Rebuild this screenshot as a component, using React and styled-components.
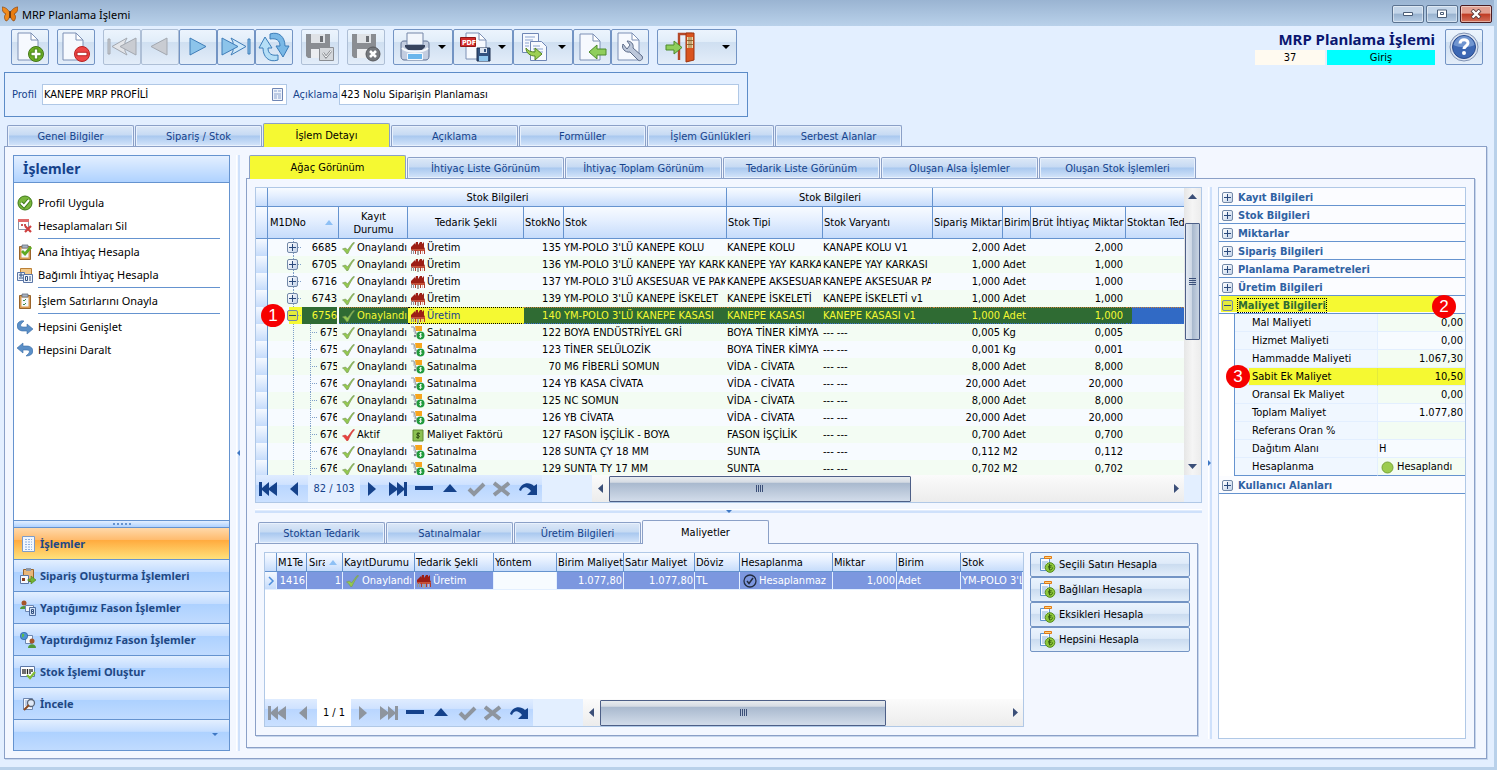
import React from 'react';
import styled, { createGlobalStyle, css } from 'styled-components';

const GlobalStyle = createGlobalStyle`
  * { box-sizing: border-box; }
  body {
    margin: 0;
    background: #b9d1ea;
    font-family: Tahoma, "DejaVu Sans Condensed", "Noto Sans", sans-serif;
    font-size: 11px;
    color: #000;
  }
  button, input { font: inherit; color: inherit; margin: 0; }
  button { padding: 0; border: 0; background: none; }
  svg { display: block; flex: none; }
`;

const uiFont = '"Noto Sans", "Open Sans", sans-serif';
const blue = '#6593cf';
const edge = '#8ba0c7';
const navy = '#15428b';
const mark = '#f5f932';

/* ---------- window ---------- */

const Window = styled.div`
  display: flex;
  flex-direction: column;
  height: 100vh;
  min-height: 700px;
  min-width: 1240px;
  border-right: 3px solid #b9d1ea;
  border-bottom: 3px solid #b9d1ea;
  background: #e3efff;
  overflow: hidden;
`;

const TitleBar = styled.header`
  display: flex;
  align-items: center;
  flex: none;
  height: 26px;
  padding: 2px 2px 0;
  gap: 4px;
  background: linear-gradient(#9ab4d2, #b9d1ea);
  font-family: ${uiFont};
  font-size: 11px;
`;

const TitleText = styled.span`
  flex: 1;
`;

const WindowButtons = styled.div`
  display: flex;
  gap: 2px;
`;

const WindowButton = styled.button`
  display: flex;
  align-items: center;
  justify-content: center;
  width: 32px;
  height: 18px;
  border: 1px solid ${p => (p.$close ? '#4a1c22' : '#5b7391')};
  border-radius: 2px;
  background: ${p =>
    p.$close
      ? 'linear-gradient(#e2a091 0 45%, #bf3a22 50%, #d2705a)'
      : 'linear-gradient(#c3d5e9 0 45%, #98b2cf 50%, #b7cee6)'};
  box-shadow: inset 0 0 0 1px rgba(255, 255, 255, 0.45);
`;

/* ---------- toolbar ---------- */

const Toolbar = styled.div`
  display: flex;
  align-items: flex-start;
  flex: none;
  gap: 8px;
  padding: 3px 11px 7px;
`;

const ToolGroup = styled.div`
  display: flex;
`;

const ToolButton = styled.button`
  display: flex;
  align-items: center;
  justify-content: center;
  gap: 4px;
  width: ${p => (p.$wide ? 80 : p.$menu ? 60 : 38)}px;
  height: 36px;
  border: 1px solid ${p => (p.disabled ? '#aebfd6' : '#7394c4')};
  border-radius: 2px;
  background: linear-gradient(#ecf4fd, #e1edf9 35%, #cfdff1 36%, #e3edf9);
  ${p =>
    (p.$menu || p.$wide) &&
    css`
      justify-content: space-between;
      padding: 0 6px;
    `}
`;

const Caret = styled.span`
  width: 0;
  height: 0;
  border: 4px solid transparent;
  border-top-color: #000;
  border-bottom: 0;
`;

const Heading = styled.div`
  display: flex;
  flex-direction: column;
  align-items: flex-end;
  margin-left: auto;
  padding-right: 2px;
`;

const HeadingTitle = styled.h1`
  margin: 0;
  font-family: ${uiFont};
  font-size: 15px;
  line-height: 21px;
  color: #0a1670;
`;

const HeadingRow = styled.div`
  display: flex;
  gap: 2px;
`;

const HeadingCell = styled.div`
  width: ${p => p.$w}px;
  height: 15px;
  line-height: 15px;
  text-align: center;
  background: ${p => p.$bg};
`;

/* ---------- filter box ---------- */

const FilterBox = styled.form`
  display: flex;
  align-items: center;
  flex: none;
  width: 744px;
  height: 45px;
  margin-left: 4px;
  padding-left: 7px;
  border: 1px solid #5b8bc7;
`;

const Label = styled.label`
  flex: none;
  width: ${p => p.$w}px;
  color: ${navy};
`;

const Field = styled.div`
  display: flex;
  align-items: center;
  flex: none;
  width: ${p => p.$w}px;
  height: 21px;
  margin-right: 6px;
  border: 1px solid #b0c8e6;
  background: #fff;
`;

const FieldInput = styled.input`
  flex: 1;
  min-width: 0;
  height: 19px;
  padding: 0 1px;
  border: 0;
  background: transparent;
  outline: 0;
`;

const FieldButton = styled.button`
  padding-right: 3px;
`;

/* ---------- tabs ---------- */

const Tabs = styled.nav`
  display: flex;
  align-items: flex-end;
  flex: none;
  height: ${p => p.$h || 23}px;
  gap: 1px;
  padding-left: ${p => p.$pad || 3}px;
`;

const Tab = styled.button`
  width: ${p => p.$w || 127}px;
  height: 21px;
  border: 1px solid ${edge};
  border-bottom: 0;
  border-radius: 2px 2px 0 0;
  color: ${navy};
  background: linear-gradient(#dde8f7, #c6daf3 45%, #a9c8ef 50%, #d5e5fa);
  box-shadow: inset 0 0 0 1px #e8f1fd;
  ${p =>
    p.$active &&
    css`
      height: 24px;
      margin-bottom: -1px;
      padding-bottom: 1px;
      color: #000;
      background: ${p.$marked ? mark : '#f3f7ff'};
      box-shadow: none;
      z-index: 1;
    `}
`;

const MainPanel = styled.main`
  display: flex;
  flex: 1;
  min-height: 0;
  margin: 0 7px 8px 4px;
  padding: 8px 11px 7px 8px;
  border: 1px solid ${edge};
  background: #f3f7ff;
  box-shadow: 1px 1px 0 #c5d5ec;
`;

/* ---------- sidebar ---------- */

const Sidebar = styled.aside`
  display: flex;
  flex-direction: column;
  flex: none;
  width: 217px;
  border: 1px solid ${blue};
  background: #fff;
  font-family: ${uiFont};
`;

const SidebarTitle = styled.h2`
  margin: 0;
  padding-left: 9px;
  height: 27px;
  line-height: 26px;
  border-bottom: 1px solid ${blue};
  background: linear-gradient(#e3efff, #afd2ff);
  font-size: 14px;
  color: ${navy};
`;

const TaskList = styled.ul`
  flex: 1;
  min-height: 0;
  margin: 0;
  padding: 8px 8px 0 3px;
  list-style: none;
  overflow: hidden;
`;

const Task = styled.li`
  padding-bottom: ${p => (p.$line ? 3 : 0)}px;
  background: ${p =>
    p.$line ? `linear-gradient(${blue}, ${blue}) 21px 24px / 182px 1px no-repeat` : 'none'};
`;

const TaskButton = styled.button`
  display: flex;
  align-items: center;
  gap: 5px;
  width: 100%;
  height: 23px;
`;

const Grip = styled.div`
  display: flex;
  align-items: center;
  justify-content: center;
  gap: 2px;
  height: 7px;
  border-top: 1px solid ${blue};
  background: linear-gradient(#e3efff, #afd2ff);
  i { width: 2px; height: 2px; background: ${blue}; }
`;

const NavButton = styled.button`
  display: flex;
  align-items: center;
  gap: 4px;
  height: 32px;
  padding-left: 6px;
  border-top: 1px solid ${blue};
  background: ${p =>
    p.$active
      ? 'linear-gradient(#ffd9aa, #ffbb6e 38%, #ffab3f 40%, #fee17b)'
      : 'linear-gradient(#e3efff, #c4ddff 38%, #add1ff 40%, #c0dbff)'};
  font-weight: bold;
  color: #1f4884;
`;

const NavMore = styled(NavButton)`
  justify-content: flex-end;
  height: 31px;
  padding-right: 11px;
`;

/* ---------- splitters ---------- */

const VSplit = styled.div`
  display: flex;
  align-items: center;
  flex: none;
  width: 16px;
  padding-left: 6px;
  background: linear-gradient(90deg, #fff 0 1px, transparent 1px 2px, #cfe1fb 2px 4px) 6px 0 / 4px 100% no-repeat;
`;

const HSplit = styled.div`
  display: flex;
  align-items: center;
  justify-content: center;
  flex: none;
  height: 17px;
  background: linear-gradient(#fff 0 1px, transparent 1px, #cfe1fb 2px 4px) 0 6px / 100% 4px no-repeat;
`;

/* ---------- content ---------- */

const Content = styled.section`
  display: flex;
  flex-direction: column;
  flex: 1;
  min-width: 0;
  padding-bottom: 3px;
`;

const Panel = styled.div`
  display: flex;
  flex: 1;
  min-height: 0;
  padding: 8px;
  border: 1px solid ${edge};
  background: #f3f7ff;
  box-shadow: 1px 1px 0 #c5d5ec;
`;

const Column = styled.div`
  display: flex;
  flex-direction: column;
  flex: 1;
  min-width: 0;
`;

const GridBox = styled.div`
  position: relative;
  display: flex;
  flex-direction: column;
  flex: 1;
  min-width: 0;
  min-height: 0;
  border: 1px solid #b0c8e6;
  background: #fff;
`;

const GridView = styled.div`
  display: flex;
  flex: 1;
  min-height: 0;
  overflow: hidden;
`;

const Table = styled.table`
  flex: 1;
  width: 100%;
  min-width: 0;
  align-self: flex-start;
  table-layout: fixed;
  border-collapse: separate;
  border-spacing: 0;
`;

const Th = styled.th`
  height: ${p => p.$h || 19}px;
  padding: 0 0 0 1px;
  border-right: 1px solid ${blue};
  border-bottom: 1px solid ${blue};
  background: linear-gradient(#f8fbff, #e6f0ff 40%, #c6dcfb);
  font-weight: normal;
  line-height: 13px;
  text-align: ${p => (p.$center ? 'center' : 'left')};
  white-space: ${p => (p.$wrap ? 'normal' : 'nowrap')};
  overflow: hidden;
  &:last-child { border-right: 0; }
`;

const SortHead = styled.span`
  display: flex;
  align-items: center;
  justify-content: space-between;
  gap: 4px;
  padding: 0 5px 0 1px;
  span { overflow: hidden; }
`;

const SortMark = styled.i`
  flex: none;
  border: 4px solid transparent;
  border-bottom: 5px solid #8ec0f5;
  border-top: 0;
`;

const Td = styled.td`
  height: 17px;
  padding: 1px 0 0;
  border-right: ${p => (p.$right ? 3 : 2)}px solid transparent;
  line-height: 16px;
  text-align: ${p => (p.$right ? 'right' : 'left')};
  white-space: nowrap;
  overflow: hidden;
`;

const StateTd = styled(Td)`
  border-right: 0;
`;

const Marker = styled.td`
  padding: 0;
  border-right: 1px solid ${blue};
  background: linear-gradient(#f5f9ff, #c6dcfb);
`;

const dots = 'repeating-linear-gradient(#7f9fc8 0 1px, transparent 1px 2px)';

const TreeTd = styled(Td)`
  padding: 0;
  background-image: ${dots}, ${p => (p.$child ? dots : 'none')};
  background-size: 1px 100%, 1px 100%;
  background-position: 25px 0, 42px 0;
  background-repeat: no-repeat;
`;

const TreeCell = styled.div`
  display: flex;
  align-items: center;
  height: 17px;
  padding-left: ${p => (p.$child ? 42 : 19)}px;
  overflow: hidden;
`;

const Dash = styled.i`
  flex: none;
  width: ${p => p.$w}px;
  height: 1px;
  background: repeating-linear-gradient(90deg, #7f9fc8 0 1px, transparent 1px 2px);
`;

const TreeNumber = styled.span`
  flex: 1;
  line-height: 16px;
  padding-top: 1px;
  padding-left: 2px;
  text-align: ${p => (p.$child ? 'left' : 'right')};
`;

const ExpandButton = styled.button`
  display: flex;
  align-items: center;
  justify-content: center;
  flex: none;
  width: 11px;
  height: 11px;
  border: 1px solid #7389a8;
  border-radius: 2px;
  background: ${p => (p.$marked ? '#e3ea3c' : 'linear-gradient(135deg, #fff, #c3d3ea)')};
`;

const Row = styled.tr`
  background: ${p => (p.$odd ? '#f3fcf3' : '#f7fbff')};
  ${p =>
    p.$selected &&
    css`
      color: ${mark};
      td:not(:first-child) {
        background: #2f6b33;
        border-top: 1px dotted #c9803a;
        border-bottom: 1px dotted #3a6fd0;
        padding: 0;
        line-height: 15px;
      }
      td:nth-child(2) { background: linear-gradient(90deg, #f7fbff 0 21px, ${mark} 21px 34px, #2f6b33 34px); border-color: transparent; }
      td:nth-child(4) { background: ${mark}; color: #15428b; border-top-color: #000; border-bottom-color: #000; }
      td:last-child { background: linear-gradient(90deg, #2f6b33 0 6px, #316ac5 6px); border-right: 0; }
      ${TreeCell} { height: 15px; }
    `}
`;

const IconText = styled.span`
  display: flex;
  align-items: center;
  gap: ${p => p.$gap || 2}px;
  padding-left: ${p => p.$pad || 3}px;
  overflow: hidden;
`;

/* ---------- scroll bars ---------- */

const VScroll = styled.div`
  display: flex;
  flex-direction: column;
  align-items: center;
  flex: none;
  width: 17px;
  background: linear-gradient(90deg, #e6e6e6, #f5f5f5 50%, #ececec);
`;

const VThumb = styled.div`
  display: flex;
  align-items: center;
  justify-content: center;
  width: 15px;
  height: 117px;
  margin-top: 17px;
  border: 1px solid #4d5f87;
  border-radius: 1px;
  background: linear-gradient(90deg, #e5ebf4, #ccd6e4 45%, #a9b9ce 50%, #c9d4e3);
`;

const HScroll = styled.div`
  display: flex;
  align-items: center;
  flex: 1;
  margin-left: ${p => p.$gap}px;
  background: linear-gradient(#fbfbfb, #ececec);
`;

const HThumb = styled.div`
  display: flex;
  align-items: center;
  justify-content: center;
  height: 26px;
  border: 1px solid #4d5f87;
  border-radius: 1px;
  background: linear-gradient(#e8ecef, #d5dbe3 22%, #a9b9ce 26%, #d2dcea);
`;

const ScrollButton = styled.button`
  display: flex;
  align-items: center;
  justify-content: center;
  flex: none;
  width: 17px;
  height: 18px;
`;

const Spacer = styled.span`
  flex: 1;
`;

const GridFooter = styled.div`
  display: flex;
  flex: none;
  height: 27px;
  background: #e3efff;
`;

const PagerButton = styled.button`
  display: flex;
  align-items: center;
  justify-content: center;
  width: 26px;
  color: ${navy};
  background: linear-gradient(#dfecff, #cfe2ff 35%, #b9d6ff 38%, #cae0ff);
  &:disabled { color: #8e959e; }
`;

const PagerLabel = styled.span`
  width: ${p => p.$w}px;
  line-height: 28px;
  text-align: center;
  color: ${p => (p.$plain ? '#000' : navy)};
  background: ${p => (p.$plain ? '#fff' : '#e3efff')};
`;

const Corner = styled.span`
  width: 17px;
`;

/* ---------- costs ---------- */

const Costs = styled.div`
  display: flex;
  flex-direction: column;
  flex: 0 0 219px;
  padding-bottom: 3px;
  padding-right: 4px;
`;

const CostPanel = styled(Panel)`
  padding-right: 7px;
  gap: 6px;
`;

const CostRow = styled.tr`
  color: #fff;
  background: #7c97df;
  td {
    height: 18px;
    padding: 0 1px;
    border-right: 1px solid #e3efff;
    border-bottom: 1px solid #e3efff;
  }
`;

const EmptyTd = styled(Td)`
  background: #f7fbff;
`;

const ActionList = styled.div`
  display: flex;
  flex-direction: column;
  flex: none;
  width: 160px;
`;

const ActionButton = styled.button`
  display: flex;
  align-items: center;
  gap: 3px;
  height: 25px;
  padding-left: 8px;
  border: 1px solid #7394c4;
  border-radius: 2px;
  background: linear-gradient(#eaf3fd, #dfebf9 45%, #cbdcf0 50%, #e3eefa);
`;

/* ---------- properties ---------- */

const Properties = styled.aside`
  flex: none;
  width: 248px;
  border: 1px solid #b0c8e6;
  background: #fff;
`;

const Group = styled.div`
  position: relative;
  display: flex;
  align-items: center;
  gap: 5px;
  height: 18px;
  padding: 1px 0 0 3px;
  border-bottom: 1px solid ${blue};
  background: ${p =>
    p.$open ? `linear-gradient(${mark}, ${mark}) 2px 0 / 226px 16px no-repeat, #fbfcff` : '#fbfcff'};
  font-weight: bold;
  color: ${p => (p.$open ? '#2f6b33' : '#2f62a3')};
`;

const GroupName = styled.span`
  line-height: 13px;
  outline: ${p => (p.$open ? '1px dotted #000' : '0')};
`;

const PropTable = styled.table`
  width: calc(100% - 15px);
  margin-left: 15px;
  table-layout: fixed;
  border-collapse: separate;
  border-spacing: 0;
  border-left: 1px solid ${blue};
  tr:last-child > * { border-bottom-color: ${blue}; }
`;

const PropName = styled.th`
  position: relative;
  width: 143px;
  height: 18px;
  padding: 1px 0 0 17px;
  font-weight: normal;
  line-height: 16px;
  text-align: left;
  background: ${p => (p.$marked ? `linear-gradient(${mark}, ${mark}) 14px 0 no-repeat, #f0f7ff` : '#f0f7ff')};
  border-right: 1px solid ${p => (p.$marked ? '#e3ea3c' : '#e3efff')};
  border-bottom: 1px solid #e3efff;
`;

const PropValue = styled.td`
  height: 18px;
  padding: 1px 2px 0 1px;
  line-height: 16px;
  text-align: ${p => (p.$left ? 'left' : 'right')};
  background: ${p => (p.$marked ? mark : p.$odd ? '#f7fbff' : '#f3fcf3')};
  border-bottom: 1px solid #e3efff;
`;

const Badge = styled.span`
  position: absolute;
  left: ${p => p.$x}px;
  top: ${p => p.$y}px;
  width: 24px;
  height: 23px;
  border-radius: 50%;
  background: #f60000;
  color: #fff;
  font-family: "Liberation Sans", Arial, sans-serif;
  font-size: 17px;
  font-weight: normal;
  line-height: 23px;
  text-align: center;
  z-index: 2;
`;

/* ---------- icons ---------- */

const Svg = ({ s = 16, w, h, children }) => (
  <svg width={w || s} height={h || s} viewBox={`0 0 ${w || s} ${h || s}`} fill="none" aria-hidden="true">
    {children}
  </svg>
);

const Sheet = ({ x = 4, y = 1, w = 20, h = 27 }) => (
  <>
    <path d={`M${x} ${y}h${w - 7}l7 7v${h - 7}h-${w}z`} fill="#f6f9fe" stroke="#7d90b5" />
    <path d={`M${x + w - 7} ${y}v7h7z`} fill="#fff" stroke="#7d90b5" />
  </>
);

const Butterfly = () => (
  <Svg s={16}>
    <path d="M8 7C6 3 3 1 0 1c0 3 1 6 4 7-2 1-2 5 0 7 2 0 3-3 4-5z" fill="#f08a1c" stroke="#8a4510" strokeWidth=".7" />
    <path d="M8 7c2-4 5-6 8-6 0 3-1 6-4 7 2 1 2 5 0 7-2 0-3-3-4-5z" fill="#e87d12" stroke="#8a4510" strokeWidth=".7" />
    <path d="M8 5v7" stroke="#50280c" strokeWidth="1.4" />
  </Svg>
);

const DocAdd = () => (
  <Svg s={30}>
    <Sheet x={3} />
    <circle cx="21" cy="22" r="7.5" fill="#6cae24" stroke="#43761a" />
    <path d="M21 16.5v11M15.5 22h11" stroke="#4b861b" strokeWidth="4.4" />
    <path d="M21 17.5v9M16.5 22h9" stroke="#fff" strokeWidth="2.4" />
  </Svg>
);

const DocRemove = () => (
  <Svg s={30}>
    <Sheet x={2} />
    <circle cx="21" cy="22" r="7.5" fill="#ee4545" stroke="#b82222" />
    <path d="M15.5 22h11" stroke="#b82222" strokeWidth="4.4" />
    <path d="M16.5 22h9" stroke="#fff" strokeWidth="2.4" />
  </Svg>
);

const Media = ({ kind, off }) => {
  const fill = off ? '#c9ccd2' : '#8cc4ea';
  const light = off ? '#e3e5e9' : '#cfe9fa';
  const stroke = off ? '#a3a8b0' : '#3f7db8';
  const shapes = {
    first: ['M1 7h2v15H1z', 'M20 6L5 14.5 20 23l-2-4v-9z', 'M29 6L13 14.5 29 23z'],
    prev: ['M22 6L6 14.5 22 23z'],
    next: ['M7 6l16 8.5L7 23z'],
    last: ['M27 7h2v15h-2z', 'M10 6l15 8.5L10 23l2-4v-9z', 'M1 6l16 8.5L1 23z'],
  };
  return (
    <Svg s={30}>
      {shapes[kind].map((d, i) => (
        <path key={d} d={d} fill={i === 1 ? light : fill} stroke={stroke} strokeLinejoin="round" />
      ))}
    </Svg>
  );
};

const Sync = () => (
  <Svg s={32}>
    <path d="M12 3c9-3 15 3 15 12h4l-6 11-7-11h4c0-6-4-8-10-7z" fill="#79b8e6" stroke="#3c7db8" />
    <path d="M20 29C11 32 5 26 5 17H1L7 6l7 11h-4c0 6 4 8 10 7z" fill="#b5def6" stroke="#3c7db8" />
  </Svg>
);

const Disk = ({ kind }) => (
  <Svg s={30}>
    <path d="M1 2h24v24H3l-2-2z" fill="#8a8d92" />
    <path d="M6 2h14v9H6z" fill="#dfe2e6" />
    <path d="M15 4h3v6h-3z" fill="#6b6e73" />
    <path d="M6 17h14v9H6z" fill="#eceef1" />
    {kind === 'ok' ? (
      <>
        <path d="M14.5 15.5h14v13h-14z" fill="#d5d8dc" stroke="#8a8d92" />
        <path d="M18 21l3 4 5-6" stroke="#8a8d92" strokeWidth="2.5" />
        <path d="M18 21l3 4 5-6" stroke="#fff" />
      </>
    ) : (
      <>
        <circle cx="22" cy="22" r="7" fill="#75787d" stroke="#57595d" />
        <path d="M19 19l6 6M25 19l-6 6" stroke="#fff" strokeWidth="2.6" />
      </>
    )}
  </Svg>
);

const Printer = () => (
  <Svg s={30}>
    <path d="M1 12c0-2 1-3 3-3h22c2 0 3 1 3 3v12c0 2-1 4-3 4H4c-2 0-3-2-3-4z" fill="#c3cde0" stroke="#5f7092" />
    <path d="M7 1h16v12H7z" fill="#f2f6fc" stroke="#7486a8" />
    <path d="M5 13h20v2l-3 3H8l-3-3z" fill="#38445e" />
    <path d="M2 16c5 5 21 5 26 0" stroke="#f4f7fb" strokeWidth="2" />
    <path d="M7.5 21.5h15v6h-15z" fill="#6bb6ec" stroke="#f4f8fd" />
  </Svg>
);

const Pdf = () => (
  <Svg s={32}>
    <Sheet x={6} y={2} w={20} h={26} />
    <path d="M.5 6.5h15v9H.5z" fill="#d02b2b" stroke="#8e1717" />
    <text x="2" y="13.5" fontSize="7" fontWeight="bold" fill="#fff" fontFamily="DejaVu Sans Condensed">PDF</text>
    <path d="M17 17h13v13H17z" fill="#33527f" stroke="#1d2e4e" />
    <path d="M20 17h7v5h-7z" fill="#dbe3ef" />
    <path d="M24 18h2v3h-2z" fill="#33527f" />
    <path d="M19 25h9v5h-9z" fill="#8fc6ee" />
  </Svg>
);

const CopyDocs = () => (
  <Svg s={30}>
    <path d="M2.5 1.5h16v19h-16z" fill="#f6f9fe" stroke="#6f86b5" />
    <path d="M5 5h10M5 8h8M5 11h4M5 14h4" stroke="#8ba3cf" />
    <path d="M10.5 9.5h11l5 5v14h-16z" fill="#f6f9fe" stroke="#6f86b5" />
    <path d="M13 14h7M13 17h10M13 20h10" stroke="#8ba3cf" />
    <path d="M6 16c2 3 5 4 9 4v-4l7 6-7 6v-4c-5 0-9-3-9-8z" fill="#9dd052" stroke="#568622" />
  </Svg>
);

const DocBack = () => (
  <Svg s={30}>
    <Sheet x={3} y={2} w={20} h={26} />
    <path d="M12 20l8-7v4h9v6h-9v4z" fill="#8fce5c" stroke="#4d8a2c" />
  </Svg>
);

const DocTool = () => (
  <Svg s={30}>
    <Sheet x={3} y={1} w={21} h={27} />
    <path d="M8 12c-2 4 2 9 7 8l8 8c2 2 6-1 4-4l-9-8c1-4-2-7-6-7l3 4-3 4z" fill="#bcc7da" stroke="#5c6b88" />
  </Svg>
);

const Door = () => (
  <Svg s={32}>
    <path d="M15 29V3h13" stroke="#b5492a" strokeWidth="2.4" />
    <path d="M22 2h8v27l-8 2z" fill="#d9531e" stroke="#9c3410" />
    <path d="M23 6h6v11h-6z" fill="#f1d9a8" />
    <path d="M25 6v11M27 6v11M23 9.5h6M23 13.5h6" stroke="#7f5420" strokeWidth=".8" />
    <path d="M2 14h8v-4l8 6.5-8 6.5v-4H2z" fill="#8fce5c" stroke="#4d8a2c" />
  </Svg>
);

const Help = () => (
  <Svg s={30}>
    <circle cx="15" cy="15" r="14" fill="#dbe3f0" stroke="#7f92b4" />
    <circle cx="15" cy="15" r="11.5" fill="#3d68b4" stroke="#2a4b8c" />
    <path d="M4.5 13c1-5 5-9 10.5-9s9.5 4 10.5 9c-6 3-15 3-21 0z" fill="#86a8dc" opacity=".7" />
    <path d="M11 11.5c0-5 8-5 8-.5 0 3-4 3-4 6" stroke="#fff" strokeWidth="3" />
    <circle cx="15" cy="21" r="2" fill="#fff" />
  </Svg>
);

const FormIcon = () => (
  <Svg w={11} h={13}>
    <path d="M.5.5h10v12H.5z" fill="#eef3fb" stroke="#6f86b5" />
    <path d="M2 3h3M6 3h3M2 6h7M2 8h3M6 8h3M2 10h3M6 10h3" stroke="#8ba3cf" />
  </Svg>
);

const OkRound = () => (
  <Svg s={16}>
    <circle cx="8" cy="8" r="7" fill="#79b63c" stroke="#3d7a17" />
    <path d="M4 8l3 3 5-6" stroke="#3d7a17" strokeWidth="4" />
    <path d="M4 8l3 3 5-6" stroke="#fff" strokeWidth="2" />
  </Svg>
);

const FormDelete = () => (
  <Svg s={16}>
    <path d="M1.5 1.5h10v10h-10z" fill="#fff" stroke="#8994a8" />
    <path d="M1 1h11v3H1z" fill="#e06a6a" />
    <path d="M4 6h2v2H4zM7 6h2v2H7z" fill="#c95656" />
    <path d="M8 8l6 6M14 8l-6 6" stroke="#cf3f3f" strokeWidth="2.2" />
  </Svg>
);

const Clipboard = ({ big }) => (
  <Svg s={16}>
    <path d="M2.5 2.5h11v13h-11z" fill="#d99b52" stroke="#9a642a" />
    <path d="M4.5 4.5h7v9h-7z" fill="#f4f8fd" />
    <path d="M5 1h6v3H5z" fill="#a9b3c1" stroke="#66707f" strokeWidth=".8" />
    {big ? (
      <path d="M5 7l3 3 6-7" stroke="#5faa22" strokeWidth="2.8" />
    ) : (
      <path d="M6 7l1 1 2-2M6 11l1 1 2-2" stroke="#3f8a4a" />
    )}
  </Svg>
);

const Numbers = () => (
  <Svg s={16}>
    <path d="M3.5 1.5h11v10h-11z" fill="#f2c98a" stroke="#bb8037" />
    <path d="M.5 5.5h7v8h-7z" fill="#e6eefb" stroke="#5b76a6" />
    <path d="M2 8h4M4 6v4M2 11h4" stroke="#33507f" />
    <path d="M6.5 7.5h9v8h-9z" fill="#eef4fc" stroke="#5b76a6" />
    <path d="M8.5 9.5h2v4h-2zM13 9v5" stroke="#33507f" />
  </Svg>
);

const Curl = ({ back }) => (
  <Svg s={16}>
    {back ? (
      <path d="M6 1L0 6l6 5V8h4c2 0 3 1 2 3l-3 3c4 0 7-2 7-5 0-3-3-5-6-5H6z" fill="#5b8fc7" stroke="#3d6fa8" strokeWidth=".6" />
    ) : (
      <path d="M10 15l6-5-6-5v3H6C4 8 3 7 4 5l3-3C3 1 0 4 0 7c0 3 3 5 6 5h4z" fill="#5b8fc7" stroke="#3d6fa8" strokeWidth=".6" />
    )}
  </Svg>
);

const ListIcon = () => (
  <Svg s={16}>
    <path d="M2.5.5h12v15h-12z" fill="#f2f7fe" stroke="#7d9cc9" />
    <path d="M5 3.5h7M5 6h7M5 8.5h7M5 11h7M5 13.5h7" stroke="#8fb0de" strokeDasharray="2 1" />
  </Svg>
);

const OrderIcon = () => (
  <Svg s={16}>
    <path d="M3.5 1.5h10v12h-10z" fill="#e8b67a" stroke="#9a642a" />
    <path d="M6 0h5v3H6z" fill="#8e98a8" />
    <path d="M.5 7.5h8v8h-8z" fill="#f4f8fd" stroke="#5b76a6" />
    <path d="M2 10h3v3H2z" fill="#8a3d1c" />
    <path d="M8 11h3V8l5 4-5 4v-3H8z" fill="#72b534" stroke="#4a7f1f" strokeWidth=".6" />
  </Svg>
);

const PersonDoc = () => (
  <Svg s={16}>
    <circle cx="4" cy="3" r="2.5" fill="#a5552a" />
    <path d="M0 9c0-4 8-4 8 0z" fill="#4f9a3c" />
    <path d="M5.5 5.5h8v6h-8z" fill="#f4f8fd" stroke="#6d86b0" />
    <path d="M9.5 7.5h6v8h-6z" fill="#cfe0f6" stroke="#4d6c9f" />
    <path d="M11.5 9.5h2v2h-2zM11.5 11.5h2v2h-2z" stroke="#33507f" />
  </Svg>
);

const GlobePerson = () => (
  <Svg s={16}>
    <path d="M5.5 3.5h7v8h-7z" fill="#f4f8fd" stroke="#6d86b0" />
    <circle cx="4" cy="4" r="3.7" fill="#4b93d6" stroke="#2b5f9d" strokeWidth=".7" />
    <path d="M2 2c2-1 3 1 2 2S3 6 2 5z" fill="#5dbb4a" />
    <circle cx="12" cy="9" r="2.5" fill="#a5552a" />
    <path d="M8 16c0-5 8-5 8 0z" fill="#4f9a3c" />
  </Svg>
);

const Barcode = () => (
  <Svg s={16}>
    <path d="M.5 2.5h14v10H.5z" fill="#fff" stroke="#5b76a6" />
    <path d="M3 5v5M5 5v5M7.500 5v5M10 5v5M12 5v3" stroke="#222" strokeWidth="1.3" />
    <path d="M7 11l3 3 5-6" stroke="#82bd35" strokeWidth="2.2" />
  </Svg>
);

const Inspect = () => (
  <Svg s={16}>
    <path d="M3.5 2.5h9v11h-9z" fill="#f4f8fd" stroke="#6d86b0" />
    <path d="M5 5h5M5 7h3M5 9h3" stroke="#8ba3cf" />
    <circle cx="11" cy="7" r="3.5" fill="#dfe9f7" stroke="#5a6678" strokeWidth="1.3" />
    <path d="M9 9l-5 5" stroke="#8a4a20" strokeWidth="2" />
  </Svg>
);

const Check = ({ red }) => (
  <Svg w={13} h={12}>
    <path d="M.5 7l3-1 2 2L11 .7h1.5C9.5 4 7.5 8 6 11.5H4.5C3.5 9.5 2 8 .5 7z" fill={red ? '#e8413c' : '#93c94f'} stroke={red ? '#cf3a36' : '#7a9a58'} strokeWidth=".7" />
  </Svg>
);

const Factory = () => (
  <Svg w={14} h={14}>
    <path d="M0 8V6l4-4v2l1-3h2v3l2-3h2v2l2-2v5l1 2z" fill="#9c1f16" />
    <path d="M0 8h14v2H0z" fill="#c4523c" />
    <path d="M0 9h1v4H0zM2 9h1v4H2z" fill="#8f949b" />
    <path d="M4 9h1v4H4zM9 9h1v4H9zM13 9h1v4h-1z" fill="#b23a2b" />
    <path d="M6 10h2v4H6z" fill="#a9a39e" />
    <path d="M11 10h1v3h-1z" fill="#e2b4ac" />
  </Svg>
);

const Cart = () => (
  <Svg w={14} h={14}>
    <path d="M0 1h3l2 7h3" stroke="#8f979f" />
    <path d="M2 3h3M2 5h3M3 7h3" stroke="#a9b0b8" />
    <path d="M4 0h7v5H5z" fill="#f7a51e" />
    <circle cx="4" cy="10" r="1.2" fill="#7a828b" />
    <circle cx="9.5" cy="9.5" r="4" fill="#1f9a3c" />
    <path d="M11 8c-2-1-3 0-2 1l1.5.8c.8 1-1 1.500-2.500.7M9.500 7v5" stroke="#fff" strokeWidth=".8" />
  </Svg>
);

const Money = () => (
  <Svg w={14} h={14}>
    <path d="M2 2h10v11H2z" fill="#8cc152" stroke="#5f8a30" />
    <path d="M9 5.500c-2-1-4 0-3 1.500l2 .8c1.500 1-1 2.500-3 1.200M7 4.500v6.500" stroke="#2c4a12" />
  </Svg>
);

const OkDark = () => (
  <Svg s={14}>
    <circle cx="7" cy="7" r="6" stroke="#222c40" strokeWidth="1.3" />
    <path d="M4 7l2 2.5L10 4" stroke="#222c40" strokeWidth="1.5" />
  </Svg>
);

const CalcIcon = () => (
  <Svg s={17}>
    <path d="M1.5 2.5h9v12h-9z" fill="#f7fafe" stroke="#5f93cc" />
    <path d="M3 6h6M3 8h4M3 10h3M3 12h3" stroke="#8ab0dc" />
    <path d="M5.5.5h7v2h-7z" fill="#ffd27a" stroke="#e07a14" />
    <circle cx="11" cy="11.5" r="4.8" fill="#8cc63a" stroke="#558c1c" />
    <path d="M10.5 8v6c2 0 3-1 3-2.5M9 10.5l3.5-1M9 12l3.5-1" stroke="#31570f" strokeWidth=".9" />
  </Svg>
);

const Plus = ({ open }) => (
  <Svg s={7}>
    <path d={open ? 'M0 3.5h7' : 'M0 3.5h7M3.5 0v7'} stroke="#2b4a7c" />
  </Svg>
);

const pagerPaths = {
  first: <path d="M0 1v14h3V9l7 6V9l8 6V1l-8 6V1L3 7V1z" fill="currentColor" />,
  prev: <path d="M13 1v14L5 8z" fill="currentColor" />,
  next: <path d="M5 1v14l8-7z" fill="currentColor" />,
  last: <path d="M0 1v14l8-6v6l7-6v6h3V1h-3v6L8 1v6z" fill="currentColor" />,
  minus: <path d="M0 5h18v4H0z" fill="currentColor" />,
  up: <path d="M2 11l7-8 7 8z" fill="currentColor" />,
  check: <path d="M2 8l5 5L17 3" stroke="currentColor" strokeWidth="4" />,
  cancel: <path d="M1 2l15 12M16 2L1 14" stroke="currentColor" strokeWidth="4" />,
  redo: <path d="M0 9C2 2 10 0 15 5l3-2v11H8l4-4C8 5 4 5 2 10z" fill="currentColor" />,
};

const Arrow = ({ dir }) => {
  const d = { up: 'M0 6l4.5-5L9 6z', down: 'M0 2l4.5 5L9 2z', left: 'M7 0v9L2 4.5z', right: 'M3 0v9l5-4.5z' };
  return (
    <Svg s={9}>
      <path d={d[dir]} fill="#3b4f78" />
    </Svg>
  );
};

const SplitArrow = ({ dir }) => {
  const d = { left: 'M4 0v6L1 3z', right: 'M0 0v6l3-3z', down: 'M0 1h6L3 4z' };
  return (
    <Svg s={6}>
      <path d={d[dir]} fill="#3f78c4" />
    </Svg>
  );
};

/* ---------- data ---------- */

const mainTabs = ['Genel Bilgiler', 'Sipariş / Stok', 'İşlem Detayı', 'Açıklama', 'Formüller', 'İşlem Günlükleri', 'Serbest Alanlar'];
const viewTabs = ['Ağaç Görünüm', 'İhtiyaç Liste Görünüm', 'İhtiyaç Toplam Görünüm', 'Tedarik Liste Görünüm', 'Oluşan Alsa İşlemler', 'Oluşan Stok İşlemleri'];
const costTabs = ['Stoktan Tedarik', 'Satınalmalar', 'Üretim Bilgileri', 'Maliyetler'];

const tasks = [
  { text: 'Profil Uygula', icon: <OkRound /> },
  { text: 'Hesaplamaları Sil', icon: <FormDelete />, line: true },
  { text: 'Ana İhtiyaç Hesapla', icon: <Clipboard big /> },
  { text: 'Bağımlı İhtiyaç Hesapla', icon: <Numbers />, line: true },
  { text: 'İşlem Satırlarını Onayla', icon: <Clipboard />, line: true },
  { text: 'Hepsini Genişlet', icon: <Curl /> },
  { text: 'Hepsini Daralt', icon: <Curl back /> },
];

const navItems = [
  ['İşlemler', <ListIcon />],
  ['Sipariş Oluşturma İşlemleri', <OrderIcon />],
  ['Yaptığımız Fason İşlemler', <PersonDoc />],
  ['Yaptırdığımız Fason İşlemler', <GlobePerson />],
  ['Stok İşlemi Oluştur', <Barcode />],
  ['İncele', <Inspect />],
];

// no, state, supply, stock no, stock, type, variant, amount, unit
const rows = [
  ['6685', 'Onaylandı', 'Üretim', '135', "YM-POLO 3'LÜ KANEPE KOLU", 'KANEPE KOLU', 'KANAPE KOLU V1', '2,000', 'Adet'],
  ['6705', 'Onaylandı', 'Üretim', '136', "YM-POLO 3'LÜ KANEPE YAY KARK", 'KANEPE YAY KARKA', 'KANEPE YAY KARKASI', '1,000', 'Adet'],
  ['6716', 'Onaylandı', 'Üretim', '137', "YM-POLO 3'LÜ AKSESUAR VE PAK", 'KANEPE AKSESUAR', 'KANEPE AKSESUAR PA', '1,000', 'Adet'],
  ['6743', 'Onaylandı', 'Üretim', '139', "YM-POLO 3'LÜ KANEPE İSKELET", 'KANEPE İSKELETİ', 'KANEPE İSKELETİ v1', '1,000', 'Adet'],
  ['6756', 'Onaylandı', 'Üretim', '140', "YM-POLO 3'LÜ KANEPE KASASI", 'KANEPE KASASI', 'KANEPE KASASI v1', '1,000', 'Adet'],
  ['6757', 'Onaylandı', 'Satınalma', '122', 'BOYA ENDÜSTRİYEL GRİ', 'BOYA TİNER KİMYA', '--- ---', '0,005', 'Kg'],
  ['6758', 'Onaylandı', 'Satınalma', '123', 'TİNER SELÜLOZİK', 'BOYA TİNER KİMYA', '--- ---', '0,001', 'Kg'],
  ['6759', 'Onaylandı', 'Satınalma', '70', 'M6 FİBERLİ SOMUN', 'VİDA - CİVATA', '--- ---', '8,000', 'Adet'],
  ['6760', 'Onaylandı', 'Satınalma', '124', 'YB KASA CİVATA', 'VİDA - CİVATA', '--- ---', '20,000', 'Adet'],
  ['6761', 'Onaylandı', 'Satınalma', '125', 'NC SOMUN', 'VİDA - CİVATA', '--- ---', '8,000', 'Adet'],
  ['6762', 'Onaylandı', 'Satınalma', '126', 'YB CİVATA', 'VİDA - CİVATA', '--- ---', '20,000', 'Adet'],
  ['6763', 'Aktif', 'Maliyet Faktörü', '127', 'FASON İŞÇİLİK - BOYA', 'FASON İŞÇİLİK', '--- ---', '0,700', 'Adet'],
  ['6764', 'Onaylandı', 'Satınalma', '128', 'SUNTA ÇY 18 MM', 'SUNTA', '--- ---', '0,112', 'M2'],
  ['6765', 'Onaylandı', 'Satınalma', '129', 'SUNTA TY 17 MM', 'SUNTA', '--- ---', '0,702', 'M2'],
];

const supplyIcons = { 'Üretim': <Factory />, 'Satınalma': <Cart />, 'Maliyet Faktörü': <Money /> };

const treeCols = [12, 71, 69, 116, 40, 163, 96, 110, 70, 28, 95, null];
const costCols = [12, 30, 36, 72, 79, 63, 67, 71, 45, 93, 64, 64, null];

const groups = ['Kayıt Bilgileri', 'Stok Bilgileri', 'Miktarlar', 'Sipariş Bilgileri', 'Planlama Parametreleri', 'Üretim Bilgileri'];

const costProps = [
  ['Mal Maliyeti', '0,00'],
  ['Hizmet Maliyeti', '0,00'],
  ['Hammadde Maliyeti', '1.067,30'],
  ['Sabit Ek Maliyet', '10,50'],
  ['Oransal Ek Maliyet', '0,00'],
  ['Toplam Maliyet', '1.077,80'],
  ['Referans Oran %', ''],
  ['Dağıtım Alanı', 'H'],
  ['Hesaplanma', 'Hesaplandı'],
];

const actions = ['Seçili Satırı Hesapla', 'Bağlıları Hesapla', 'Eksikleri Hesapla', 'Hepsini Hesapla'];

/* ---------- parts ---------- */

const TabBar = ({ items, active, width, marked, height, pad }) => (
  <Tabs $h={height} $pad={pad}>
    {items.map(item => (
      <Tab key={item} type="button" $w={width} $active={item === active} $marked={marked}>
        {item}
      </Tab>
    ))}
  </Tabs>
);

const Cols = ({ widths }) => (
  <colgroup>
    {widths.map((w, i) => (
      <col key={i} width={w || undefined} />
    ))}
  </colgroup>
);

const Pager = ({ label, width, plain, stops }) => {
  const button = (kind, off) => (
    <PagerButton key={kind} type="button" aria-label={kind} disabled={off}>
      <Svg w={20} h={16}>{pagerPaths[kind]}</Svg>
    </PagerButton>
  );
  return (
    <>
      {['first', 'prev'].map(k => button(k, stops))}
      <PagerLabel $w={width} $plain={plain}>{label}</PagerLabel>
      {['next', 'last'].map(k => button(k, stops))}
      {['minus', 'up'].map(k => button(k))}
      {['check', 'cancel'].map(k => button(k, true))}
      {button('redo')}
    </>
  );
};

const HorizontalBar = ({ gap, size }) => (
  <HScroll $gap={gap}>
    <ScrollButton type="button" aria-label="left"><Arrow dir="left" /></ScrollButton>
    <HThumb style={{ width: `${size}%` }}>
      <Svg s={9}><path d="M1.5 1v7M3.5 1v7M5.5 1v7M7.5 1v7" stroke="#3b4f78" /></Svg>
    </HThumb>
    <Spacer />
    <ScrollButton type="button" aria-label="right"><Arrow dir="right" /></ScrollButton>
  </HScroll>
);

const TreeRow = ({ row, index }) => {
  const [no, state, supply, stockNo, stock, type, variant, amount, unit] = row;
  const child = index > 4;
  const selected = index === 4;
  return (
    <Row $odd={index % 2 === 1} $selected={selected}>
      <Marker />
      <TreeTd $child={child}>
        <TreeCell $child={child}>
          {!child && (
            <ExpandButton type="button" aria-label={no} $marked={selected}>
              <Plus open={selected} />
            </ExpandButton>
          )}
          <Dash $w={child ? 8 : 4} />
          <TreeNumber $child={child}>{no}</TreeNumber>
        </TreeCell>
      </TreeTd>
      <StateTd><IconText><Check red={state === 'Aktif'} />{state}</IconText></StateTd>
      <Td><IconText>{supplyIcons[supply]}{supply}</IconText></Td>
      <Td $right>{stockNo}</Td>
      <Td>{stock}</Td>
      <Td>{type}</Td>
      <Td>{variant}</Td>
      <Td $right>{amount}</Td>
      <Td>{unit}</Td>
      <Td $right>{amount}</Td>
      <Td />
    </Row>
  );
};

const TreeGrid = () => (
  <GridBox>
    <Badge $x={5} $y={116}>1</Badge>
    <GridView>
      <Table>
        <Cols widths={treeCols} />
        <thead>
          <tr>
            <Th />
            <Th colSpan={5} $center>Stok Bilgileri</Th>
            <Th colSpan={2} $center>Stok Bilgileri</Th>
            <Th colSpan={4} />
          </tr>
          <tr>
            <Th $h={32} />
            <Th><SortHead><span>M1DNo</span><SortMark /></SortHead></Th>
            <Th $center $wrap>Kayıt Durumu</Th>
            <Th $center>Tedarik Şekli</Th>
            <Th>StokNo</Th>
            <Th>Stok</Th>
            <Th>Stok Tipi</Th>
            <Th>Stok Varyantı</Th>
            <Th>Sipariş Miktar</Th>
            <Th>Birim</Th>
            <Th>Brüt İhtiyaç Miktar</Th>
            <Th>Stoktan Ted</Th>
          </tr>
        </thead>
        <tbody>
          {rows.map((row, i) => (
            <TreeRow key={row[0]} row={row} index={i} />
          ))}
        </tbody>
      </Table>
      <VScroll>
        <ScrollButton type="button" aria-label="up"><Arrow dir="up" /></ScrollButton>
        <VThumb>
          <Svg s={9}><path d="M1 1.5h7M1 3.5h7M1 5.5h7M1 7.5h7" stroke="#3b4f78" /></Svg>
        </VThumb>
        <Spacer />
        <ScrollButton type="button" aria-label="down"><Arrow dir="down" /></ScrollButton>
      </VScroll>
    </GridView>
    <GridFooter>
      <Pager label="82 / 103" width={52} />
      <HorizontalBar gap={50} size={51} />
      <Corner />
    </GridFooter>
  </GridBox>
);

const CostGrid = () => (
  <GridBox>
    <GridView>
      <Table>
        <Cols widths={costCols} />
        <thead>
          <tr>
            <Th />
            <Th>M1Te</Th>
            <Th><SortHead><span>Sıra</span><SortMark /></SortHead></Th>
            <Th>KayıtDurumu</Th>
            <Th>Tedarik Şekli</Th>
            <Th>Yöntem</Th>
            <Th>Birim Maliyet</Th>
            <Th>Satır Maliyet</Th>
            <Th>Döviz</Th>
            <Th>Hesaplanma</Th>
            <Th>Miktar</Th>
            <Th>Birim</Th>
            <Th>Stok</Th>
          </tr>
        </thead>
        <tbody>
          <CostRow>
            <Marker><Svg w={10} h={12}><path d="M3 2l4 4-4 4" stroke="#4f8fdc" strokeWidth="1.5" /></Svg></Marker>
            <Td $right>1416</Td>
            <Td $right>1</Td>
            <Td><IconText $gap={3} $pad={2}><Check />Onaylandı</IconText></Td>
            <Td><IconText $pad={1}><Factory />Üretim</IconText></Td>
            <EmptyTd />
            <Td $right>1.077,80</Td>
            <Td $right>1.077,80</Td>
            <Td>TL</Td>
            <Td><IconText $pad={2}><OkDark />Hesaplanmaz</IconText></Td>
            <Td $right>1,000</Td>
            <Td>Adet</Td>
            <Td>YM-POLO 3'LÜ</Td>
          </CostRow>
        </tbody>
      </Table>
    </GridView>
    <GridFooter>
      <Pager label="1 / 1" width={34} plain stops />
      <HorizontalBar gap={50} size={65} />
    </GridFooter>
  </GridBox>
);

const PropertyGroup = ({ name, open, children }) => (
  <Group $open={open}>
    <ExpandButton type="button" aria-label={name} $marked={open}><Plus open={open} /></ExpandButton>
    <GroupName $open={open}>{name}</GroupName>
    {children}
  </Group>
);

const PropertyGrid = () => (
  <Properties>
    {groups.map(name => (
      <PropertyGroup key={name} name={name} />
    ))}
    <PropertyGroup name="Maliyet Bilgileri" open>
      <Badge $x={213} $y={-1}>2</Badge>
    </PropertyGroup>
    <PropTable>
      <tbody>
        {costProps.map(([name, value], i) => {
          const marked = i === 3;
          return (
            <tr key={name}>
              <PropName scope="row" $marked={marked}>
                {name}
                {marked && <Badge $x={-9} $y={-3}>3</Badge>}
              </PropName>
              <PropValue $marked={marked} $odd={i % 2 === 1} $left={i > 6}>
                {value === 'Hesaplandı' ? (
                  <IconText $gap={3} $pad={2}>
                    <Svg s={13}><circle cx="6.5" cy="6.5" r="5.5" fill="#9ccc4e" stroke="#76a336" /></Svg>
                    {value}
                  </IconText>
                ) : (
                  value
                )}
              </PropValue>
            </tr>
          );
        })}
      </tbody>
    </PropTable>
    <PropertyGroup name="Kullanıcı Alanları" />
  </Properties>
);

const TopToolbar = () => (
  <Toolbar>
    <ToolButton type="button" aria-label="Yeni"><DocAdd /></ToolButton>
    <ToolButton type="button" aria-label="Sil"><DocRemove /></ToolButton>
    <ToolGroup>
      <ToolButton type="button" aria-label="İlk" disabled><Media kind="first" off /></ToolButton>
      <ToolButton type="button" aria-label="Önceki" disabled><Media kind="prev" off /></ToolButton>
      <ToolButton type="button" aria-label="Sonraki"><Media kind="next" /></ToolButton>
      <ToolButton type="button" aria-label="Son"><Media kind="last" /></ToolButton>
      <ToolButton type="button" aria-label="Yenile"><Sync /></ToolButton>
    </ToolGroup>
    <ToolButton type="button" aria-label="Kaydet" disabled><Disk kind="ok" /></ToolButton>
    <ToolButton type="button" aria-label="Vazgeç" disabled><Disk kind="cancel" /></ToolButton>
    <ToolGroup>
      <ToolButton type="button" aria-label="Yazdır" $menu><Printer /><Caret /></ToolButton>
      <ToolButton type="button" aria-label="PDF" $menu><Pdf /><Caret /></ToolButton>
      <ToolButton type="button" aria-label="Kopyala" $menu><CopyDocs /><Caret /></ToolButton>
      <ToolButton type="button" aria-label="Aktar"><DocBack /></ToolButton>
      <ToolButton type="button" aria-label="Ayarlar"><DocTool /></ToolButton>
    </ToolGroup>
    <ToolButton type="button" aria-label="Çıkış" $wide><Door /><Caret /></ToolButton>
    <Heading>
      <HeadingTitle>MRP Planlama İşlemi</HeadingTitle>
      <HeadingRow>
        <HeadingCell $w={70} $bg="#fffaf0">37</HeadingCell>
        <HeadingCell $w={108} $bg="#00ffff">Giriş</HeadingCell>
      </HeadingRow>
    </Heading>
    <ToolButton type="button" aria-label="Yardım"><Help /></ToolButton>
  </Toolbar>
);

const App = () => (
  <>
    <GlobalStyle />
    <Window>
      <TitleBar>
        <Butterfly />
        <TitleText>MRP Planlama İşlemi</TitleText>
        <WindowButtons>
          <WindowButton type="button" aria-label="Küçült">
            <Svg w={12} h={6}><path d="M1.5 1.5h9v3h-9z" fill="#fff" stroke="#4a5c76" /></Svg>
          </WindowButton>
          <WindowButton type="button" aria-label="Büyüt">
            <Svg w={12} h={10}><path d="M1.5 1h9v7.5h-9z" fill="#fff" stroke="#4a5c76" /><path d="M4.5 3.5h3v2h-3z" stroke="#4a5c76" /></Svg>
          </WindowButton>
          <WindowButton type="button" aria-label="Kapat" $close>
            <Svg w={12} h={10}>
              <path d="M2 1l8 8M10 1L2 9" stroke="#5a3a3a" strokeWidth="4" />
              <path d="M2.5 1.5l7 7M9.5 1.5l-7 7" stroke="#fff" strokeWidth="2.4" />
            </Svg>
          </WindowButton>
        </WindowButtons>
      </TitleBar>
      <TopToolbar />
      <FilterBox>
        <Label htmlFor="profile" $w={30}>Profil</Label>
        <Field $w={245}>
          <FieldInput id="profile" defaultValue="KANEPE MRP PROFİLİ" />
          <FieldButton type="button" aria-label="Profil seç"><FormIcon /></FieldButton>
        </Field>
        <Label htmlFor="note" $w={46}>Açıklama</Label>
        <Field $w={400}>
          <FieldInput id="note" defaultValue="423 Nolu Siparişin Planlaması" />
        </Field>
      </FilterBox>
      <TabBar items={mainTabs} active="İşlem Detayı" marked height={29} pad={7} />
      <MainPanel>
        <Sidebar>
          <SidebarTitle>İşlemler</SidebarTitle>
          <TaskList>
            {tasks.map(task => (
              <Task key={task.text} $line={task.line}>
                <TaskButton type="button">{task.icon}{task.text}</TaskButton>
              </Task>
            ))}
          </TaskList>
          <Grip><i /><i /><i /><i /><i /></Grip>
          {navItems.map(([text, icon], i) => (
            <NavButton key={text} type="button" $active={i === 0}>{icon}{text}</NavButton>
          ))}
          <NavMore type="button" aria-label="Diğer"><SplitArrow dir="down" /></NavMore>
        </Sidebar>
        <VSplit><SplitArrow dir="left" /></VSplit>
        <Content>
          <TabBar items={viewTabs} active="Ağaç Görünüm" width={157} marked />
          <Panel>
            <Column>
              <TreeGrid />
              <HSplit><SplitArrow dir="down" /></HSplit>
              <Costs>
                <TabBar items={costTabs} active="Maliyetler" />
                <CostPanel>
                  <CostGrid />
                  <ActionList>
                    {actions.map(text => (
                      <ActionButton key={text} type="button"><CalcIcon />{text}</ActionButton>
                    ))}
                  </ActionList>
                </CostPanel>
              </Costs>
            </Column>
            <VSplit><SplitArrow dir="right" /></VSplit>
            <PropertyGrid />
          </Panel>
        </Content>
      </MainPanel>
    </Window>
  </>
);

export default App;
